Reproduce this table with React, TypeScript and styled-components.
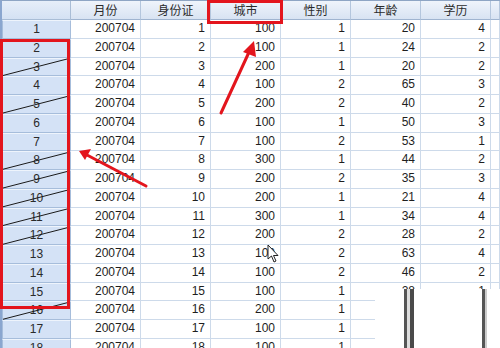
import React from "react";
import styled, { createGlobalStyle } from "styled-components";

const GlobalStyle = createGlobalStyle`
  html, body {
    margin: 0;
    padding: 0;
    background: #fff;
    overflow: hidden;
  }
  body {
    font-family: "Liberation Sans", Arial, "Noto Sans CJK SC", sans-serif;
  }
`;

const ROW_H = 18.75;

const Sheet = styled.div`
  position: relative;
  width: 500px;
  height: 348px;
  overflow: hidden;
  background: #fff;
`;

const Grid = styled.div`
  display: grid;
  grid-template-columns: 69px repeat(6, 70px) 1fr;
  grid-template-rows: 19px;
  grid-auto-rows: ${ROW_H}px;
  border-top: 1px solid #8ea5c4;
  border-left: 2px solid #8aa6cf;
`;

const Corner = styled.div`
  background: linear-gradient(#e6eef9, #d4e1f3);
  border-right: 1px solid #a9bdd6;
  border-bottom: 1px solid #a9bdd6;
`;

const HeadCell = styled.div`
  background: linear-gradient(#eff4fb, #d8e3f2);
  border-right: 1px solid #b4c6dd;
  border-bottom: 1px solid #9fb4d0;
  font-family: "Noto Sans CJK SC", "Liberation Sans", sans-serif;
  font-size: 12px;
  line-height: 17px;
  color: #2b2b2b;
  text-align: center;
  overflow: hidden;
  white-space: nowrap;
`;

const RowHead = styled.div`
  background: #d4e2f6;
  border: 1px solid #a6bddb;
  border-top-color: #eef4fc;
  box-sizing: border-box;
  font-size: 12px;
  line-height: 16px;
  color: #2a2a2a;
  text-align: center;
`;

const Cell = styled.div<{ $faded?: boolean }>`
  border-right: 1px solid #cddaea;
  border-bottom: 1px solid #cddaea;
  box-sizing: border-box;
  font-size: 12px;
  line-height: 17px;
  color: #1e1e1e;
  text-align: right;
  padding-right: 5px;
  overflow: hidden;
  white-space: nowrap;
`;

const Ghost = styled.div`
  position: absolute;
  left: 375px;
  top: 289px;
  right: 0;
  bottom: 0;
  background: #fff;
`;

const Overlay = styled.svg`
  position: absolute;
  left: 0;
  top: 0;
  pointer-events: none;
`;

const headers = ["月份", "身份证", "城市", "性别", "年龄", "学历", ""];

const city = [100, 100, 200, 100, 200, 100, 100, 300, 200, 200, 300, 200, 100, 100, 100, 200, 100, 100];
const sex = [1, 1, 1, 2, 2, 1, 2, 1, 2, 1, 1, 2, 2, 2, 1, 1, 1, 1];
const age = [20, 24, 20, 65, 40, 50, 53, 44, 35, 21, 34, 28, 63, 46, 28, 30, 41, 33];
const edu = [4, 2, 2, 3, 2, 3, 1, 2, 3, 4, 4, 2, 4, 2, 1, 2, 3, 1];

const struck = [3, 5, 8, 9, 10, 11, 12, 16];

export default function App() {
  const rows = Array.from({ length: 18 }, (_, i) => i);
  return (
    <Sheet>
      <GlobalStyle />
      <Grid>
        <Corner />
        {headers.map((h, i) => (
          <HeadCell key={i}>{h}</HeadCell>
        ))}
        {rows.map((i) => (
          <React.Fragment key={i}>
            <RowHead>{i + 1}</RowHead>
            <Cell>200704</Cell>
            <Cell>{i + 1}</Cell>
            <Cell>{city[i]}</Cell>
            <Cell>{sex[i]}</Cell>
            <Cell>{age[i]}</Cell>
            <Cell>{edu[i]}</Cell>
            <Cell />
          </React.Fragment>
        ))}
      </Grid>

      <Ghost>
        <svg width="125" height="60">
          <rect x="29" y="0" width="3" height="60" fill="#555" />
          <rect x="32" y="0" width="3" height="60" fill="#ddd" />
          <rect x="35" y="0" width="4" height="60" fill="#4a4a4a" />
          <rect x="107" y="0" width="3" height="60" fill="#555" />
          <rect x="110" y="0" width="2" height="60" fill="#ccc" />
        </svg>
      </Ghost>

      <Overlay width="500" height="348">
        {struck.map((r) => {
          const top = 20 + (r - 1) * ROW_H;
          return <line key={r} x1="3" y1={top + 18} x2="69" y2={top + 1} stroke="#1a1a1a" strokeWidth="1" />;
        })}

        <rect x="1.5" y="40.5" width="67" height="267" fill="none" stroke="#e3151d" strokeWidth="3" />
        <rect x="208.5" y="1.5" width="73" height="21" fill="none" stroke="#e3151d" strokeWidth="3" />

        <line x1="221" y1="113" x2="250" y2="50" stroke="#e3151d" strokeWidth="3" strokeLinecap="round" />
        <polygon points="254,41 243,52 256,57" fill="#e3151d" />

        <line x1="146" y1="186" x2="87" y2="155" stroke="#e3151d" strokeWidth="3" strokeLinecap="round" />
        <polygon points="79,151 91,149 85,160" fill="#e3151d" />

        <path
          d="M268 245 L268 259 L271.5 256 L274 262 L276 261 L273.5 255.5 L278 255.5 Z"
          fill="#fff"
          stroke="#222"
          strokeWidth="1"
          strokeLinejoin="round"
        />
      </Overlay>
    </Sheet>
  );
}
